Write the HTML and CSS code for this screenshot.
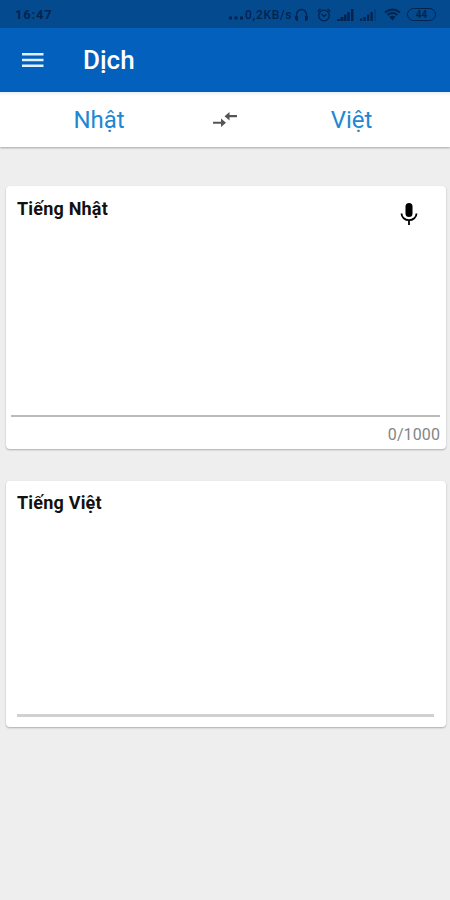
FILE: index.html
```html
<!DOCTYPE html>
<html lang="vi">
<head>
    <meta charset="UTF-8">
    <meta name="viewport" content="width=device-width, initial-scale=1.0">
    <title>Dịch</title>
    <link rel="stylesheet" href="styles.css">
</head>
<body>

    <div class="status-bar">
        <span class="clock">16:47</span>
        <div class="status-icons">
            <svg class="dots" width="15" height="4" viewBox="0 0 15 4"><path d="M0 .5h3v3H0zM5.500 .5h3v3h-3zM11 .5h3v3h-3z"/></svg>
            <span class="speed">0,2KB/s</span>
            <svg class="headphones" width="15" height="14" viewBox="0 0 15 14"><path class="line" d="M2.500 9V6.500a5 5 0 0 1 10 0V9"/><path d="M1 8h3v5H2.500L1 11zM14 8h-3v5h1.500L14 11z"/></svg>
            <svg class="alarm" width="14" height="14" viewBox="0 0 14 14"><circle class="line" cx="7" cy="7.500" r="5.300"/><path class="line" d="M.8 3.500L3.500 1M13.200 3.500L10.500 1M4.500 6L7 8.300L9.500 6.500"/></svg>
            <svg class="signal" width="17" height="12" viewBox="0 0 17 12"><path d="M0 10h3v2H0zM3.500 8h3v4h-3zM7 5.500h2.500V12H7zM10.300 3h2.500v9h-2.500zM14 0h2.500v12H14z"/></svg>
            <svg class="signal-two" width="17" height="12" viewBox="0 0 17 12"><path d="M0 9.500h2.300V12H0zM3.500 8h2.300v4H3.500zM7 5.500h2.300V12H7zM10.500 3h2.300v9h-2.300z"/><path class="faint" d="M14 0h2v12h-2z"/></svg>
            <svg class="wifi" width="17" height="13" viewBox="0 0 17 13"><path class="arc" d="M1 4.500Q8.500 -1.500 16 4.500M3.500 7Q8.500 3 13.500 7"/><path d="M5.300 8.800Q8.500 6.500 11.700 8.800L8.500 12.500z"/></svg>
            <span class="battery">44</span>
        </div>
    </div>

    <header class="toolbar">
        <svg class="menu" width="22" height="16" viewBox="0 0 22 16"><path d="M0 1h21.500v2.500H0zM0 6.700h21.500v2.600H0zM0 12.500h21.500V15H0z"/></svg>
        <h1>Dịch</h1>
    </header>

    <div class="languages">
        <span class="lang">Nhật</span>
        <svg class="swap" width="24" height="16" viewBox="0 0 24 16"><path d="M0 9.700h8V6.500l5 4.200-5 4.300v-3.200H0zM24 3.100h-7.500V0l-5 4.200 5 4.300V5.200H24z"/></svg>
        <span class="lang">Việt</span>
    </div>

    <main>
        <section class="card source">
            <div class="card-head">
                <h2>Tiếng Nhật</h2>
                <svg class="mic" width="18" height="22" viewBox="0 0 18 22"><rect x="5.500" y="0" width="7" height="14" rx="3.500"/><path class="stand" d="M1.500 10.500a7.500 6.700 0 0 0 15 0M9 17.200V22"/></svg>
            </div>
            <div class="text-area"></div>
            <p class="counter">0/1000</p>
        </section>

        <section class="card result">
            <h2>Tiếng Việt</h2>
            <div class="text-area"></div>
        </section>
    </main>

</body>
</html>
```
FILE: styles.css
```css
* {
    box-sizing: border-box;
}
body {
    margin: 0;
    height: 900px;
    font-family: Roboto, "Noto Sans", sans-serif;
    background-color: #eeeeee;
}
h1, h2, p {
    margin: 0;
}
svg {
    display: block;
    flex: none;
}
.status-bar {
    display: flex;
    justify-content: space-between;
    height: 28px;
    padding: 1px 14px 0 15px;
    align-items: center;
    background-color: #034b8e;
    color: #04234e;
    font-size: 12px;
}
.clock {
    font-weight: 700;
    font-size: 13px;
    letter-spacing: 0.8px;
}
.status-icons {
    display: flex;
    align-items: center;
    fill: #04234e;
}
.dots {
    margin-top: 7px;
    margin-right: 1px;
}
.speed {
    width: 49px;
    font-weight: 500;
    letter-spacing: 0.7px;
    white-space: nowrap;
}
.headphones {
    margin-right: 8px;
}
.alarm {
    margin-right: 6px;
}
.signal {
    margin-right: 6px;
}
.signal-two {
    margin-right: 7px;
}
.wifi {
    margin-right: 6px;
}
.line {
    fill: none;
    stroke: #04234e;
    stroke-width: 1.3;
}
.arc {
    fill: none;
    stroke: #04234e;
    stroke-width: 1.7;
}
.faint {
    opacity: 0.25;
}
.battery {
    width: 29px;
    height: 13px;
    border: 1.5px solid #04234e;
    border-radius: 7px;
    font-size: 10px;
    font-weight: 700;
    line-height: 11px;
    text-align: center;
}
.toolbar {
    display: flex;
    align-items: center;
    height: 64px;
    padding-left: 22px;
    background-color: #0361bd;
    color: white;
}
.menu {
    margin-right: 39px;
    fill: #dff0ff;
}
.toolbar h1 {
    font-size: 26px;
    font-weight: 500;
    line-height: 30px;
}
.languages {
    display: grid;
    grid-template-columns: 198px 54px 199px;
    align-items: center;
    justify-items: center;
    height: 55px;
    background: linear-gradient(#e9eef4, white 4px);
    box-shadow: 0 1px 2px rgba(0, 0, 0, 0.3);
}
.lang {
    color: #2187d2;
    font-size: 24px;
    line-height: 28px;
}
.swap {
    fill: #555;
}
main {
    display: flex;
    flex-direction: column;
    gap: 32px;
    padding: 39px 4px 0 6px;
}
.card {
    display: flex;
    flex-direction: column;
    background: white;
    border-radius: 4px;
    box-shadow: 0 1px 2px rgba(0, 0, 0, 0.28);
}
.card h2 {
    font-size: 18px;
    font-weight: 700;
    line-height: 22px;
    letter-spacing: 0.2px;
    color: #111;
}
.source {
    height: 263px;
    padding: 12px 6px 0 5px;
}
.card-head {
    display: flex;
    justify-content: space-between;
    padding: 0 22px 0 6px;
}
.mic {
    margin-top: 5px;
}
.stand {
    fill: none;
    stroke: black;
    stroke-width: 1.8;
}
.text-area {
    flex: 1;
    border-bottom: 2px solid #bbb;
}
.counter {
    height: 32px;
    padding-top: 8px;
    font-size: 16px;
    line-height: 20px;
    letter-spacing: 0.1px;
    text-align: right;
    color: #858585;
}
.result {
    height: 246px;
    padding: 11px 12px 10px 11px;
}
.result .text-area {
    border-bottom: 3px solid #d0d0d0;
}
```
